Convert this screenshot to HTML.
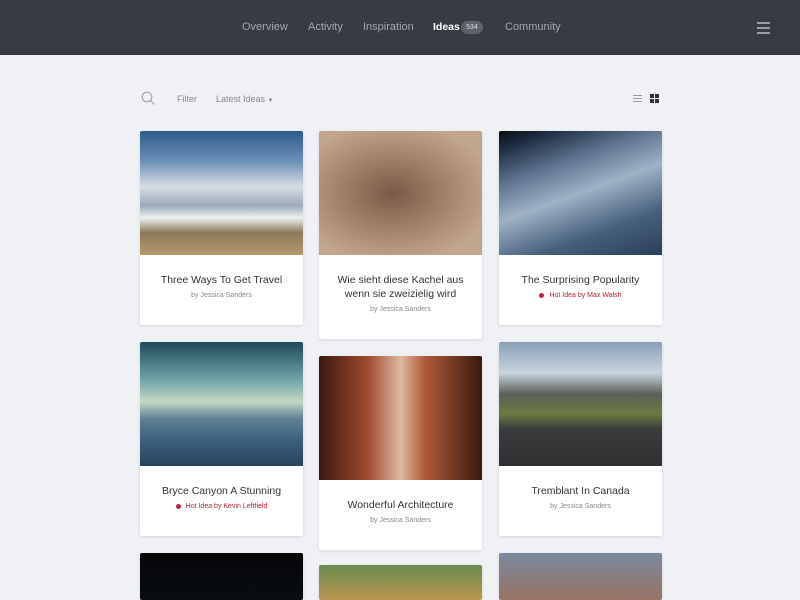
<!DOCTYPE html>
<html><head><meta charset="utf-8"><style>
*{margin:0;padding:0;box-sizing:border-box}
html,body{width:800px;height:600px;overflow:hidden}
body{background:#f0f1f5;font-family:"Liberation Sans",sans-serif;position:relative}
.top{position:absolute;left:0;top:0;width:800px;height:55px;background:#383b44}
.nav{position:absolute;top:21px;font-size:11px;color:#a3a6ae}
.badge{position:absolute;left:461px;top:21px;width:22px;height:13px;border-radius:7px;background:#5e616a;color:#ddd;font-size:7px;text-align:center;line-height:13px}
.ham{position:absolute;left:757px;width:13px;height:1.5px;background:#9a9da5}
.card{position:absolute;width:163px;background:#fff;box-shadow:0 1px 3px rgba(0,0,0,.12);border-radius:2px;overflow:hidden}
.img{height:124px}
.t{text-align:center;font-size:10.5px;color:#333;line-height:14px}
.s{text-align:center;font-size:7px;color:#888;margin-top:5px}
.hot{color:#b5243c}
.hot:before{content:"";display:inline-block;width:5px;height:5px;border-radius:50%;background:#b5243c;margin-right:5px;vertical-align:middle}
</style></head><body>
<div class="top"></div>
<div class="nav" style="left:242px">Overview</div>
<div class="nav" style="left:308px">Activity</div>
<div class="nav" style="left:363px">Inspiration</div>
<div class="nav" style="left:433px;color:#fff;font-weight:bold;font-size:10.5px">Ideas</div>
<div class="badge">534</div>
<div class="nav" style="left:505px">Community</div>
<div class="ham" style="top:22px"></div><div class="ham" style="top:27px"></div><div class="ham" style="top:32px"></div>

<svg style="position:absolute;left:141px;top:91px" width="15" height="15"><circle cx="6" cy="6" r="4.8" fill="none" stroke="#a0a3ab" stroke-width="1.2"/><line x1="9.5" y1="9.5" x2="13.5" y2="13.5" stroke="#a0a3ab" stroke-width="1.2"/></svg>
<div style="position:absolute;left:177px;top:94px;font-size:9px;color:#888">Filter</div>
<div style="position:absolute;left:216px;top:94px;font-size:9px;color:#888">Latest Ideas <span style="font-size:6px">▼</span></div>
<div style="position:absolute;left:633px;top:95px;width:9px;height:7px;border-top:1px solid #999;border-bottom:1px solid #999"><div style="margin-top:2px;height:1px;background:#999"></div></div>
<svg style="position:absolute;left:650px;top:94px" width="9" height="9"><rect x="0" y="0" width="4" height="4" fill="#333"/><rect x="5" y="0" width="4" height="4" fill="#333"/><rect x="0" y="5" width="4" height="4" fill="#333"/><rect x="5" y="5" width="4" height="4" fill="#333"/></svg>

<div class="card" style="left:140px;top:131px;height:194px"><div class="img" style="background:linear-gradient(180deg,#2d5a8a 0%,#6f92b8 25%,#d8dde3 45%,#9aaabb 60%,#eef0f2 70%,#8a7a5c 82%,#b59a6e 100%)"></div><div class="t" style="margin-top:18px">Three Ways To Get Travel</div><div class="s">by Jessica Sanders</div></div>
<div class="card" style="left:319px;top:131px;height:208px"><div class="img" style="background:radial-gradient(ellipse at 45% 50%,#7a5a46,#a88a70 50%,#c2a68c 80%)"></div><div class="t" style="margin-top:18px">Wie sieht diese Kachel aus<br>wenn sie zweizielig wird</div><div class="s">by Jessica Sanders</div></div>
<div class="card" style="left:499px;top:131px;height:194px"><div class="img" style="background:linear-gradient(160deg,#0a0d12 0%,#1c2b40 10%,#5f7490 30%,#9fb2c6 50%,#47607c 75%,#2a3e58 100%)"></div><div class="t" style="margin-top:18px">The Surprising Popularity</div><div class="s hot">Hot Idea by Max Walsh</div></div>

<div class="card" style="left:140px;top:342px;height:194px"><div class="img" style="background:linear-gradient(180deg,#1f4a5a 0%,#6fa3a8 30%,#c5d7c4 48%,#5f8096 62%,#3b5e7a 80%,#28455e 100%)"></div><div class="t" style="margin-top:18px">Bryce Canyon A Stunning</div><div class="s hot">Hot Idea by Kevin Leftfield</div></div>
<div class="card" style="left:319px;top:356px;height:194px"><div class="img" style="background:linear-gradient(90deg,#3a1810 0%,#a04a30 30%,#e0b8a0 50%,#b05a38 65%,#3a1810 100%)"></div><div class="t" style="margin-top:18px">Wonderful Architecture</div><div class="s">by Jessica Sanders</div></div>
<div class="card" style="left:499px;top:342px;height:194px"><div class="img" style="background:linear-gradient(180deg,#8aa0b8 0%,#c9d4de 25%,#5a6058 42%,#6a7a40 58%,#3a3c3e 70%,#2e3032 100%)"></div><div class="t" style="margin-top:18px">Tremblant In Canada</div><div class="s">by Jessica Sanders</div></div>

<div class="card" style="left:140px;top:553px;height:47px"><div class="img" style="background:linear-gradient(180deg,#050608,#101820)"></div></div>
<div class="card" style="left:319px;top:565px;height:35px"><div class="img" style="background:linear-gradient(180deg,#6a8a50,#c09850 30%,#a07038)"></div></div>
<div class="card" style="left:499px;top:553px;height:47px"><div class="img" style="background:linear-gradient(180deg,#7a8aa0,#9a7060 40%,#805040)"></div></div>
</body></html>
